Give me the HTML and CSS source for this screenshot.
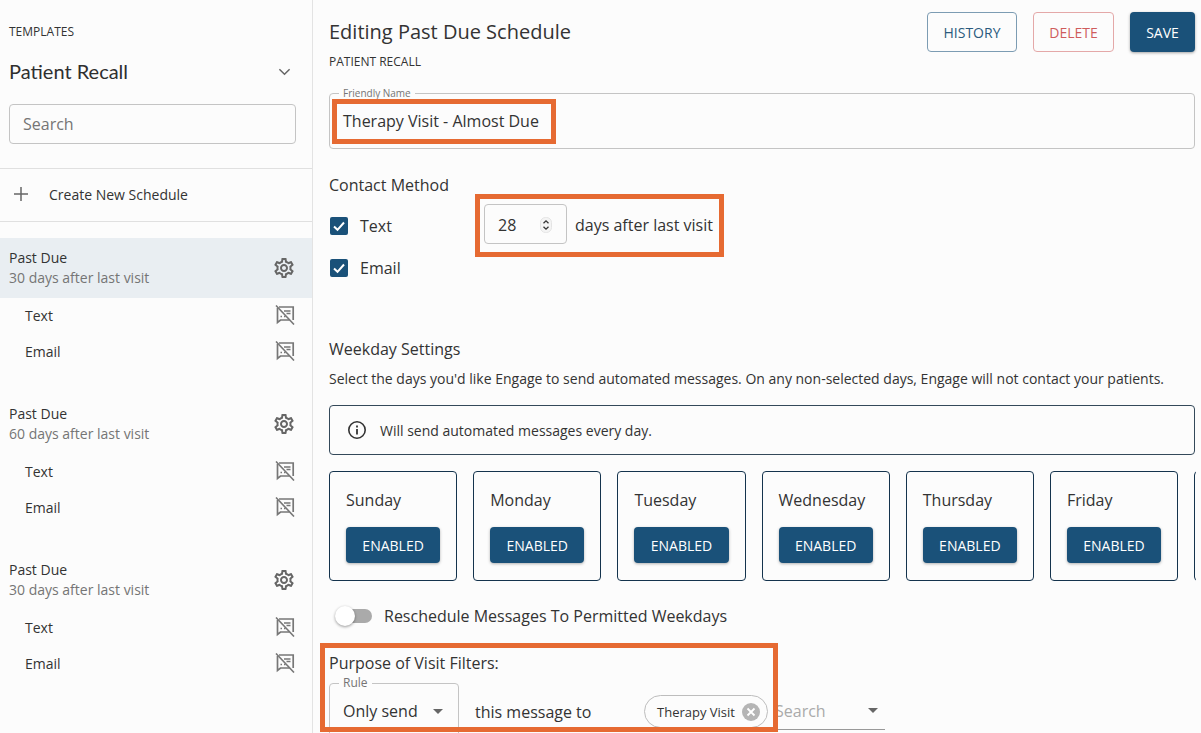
FILE: index.html
```html
<!DOCTYPE html>
<html lang="en">
<head>
    <meta charset="UTF-8">
    <title>Editing Past Due Schedule</title>
    <link rel="stylesheet" href="styles.css">
</head>
<body>
    <svg class="defs">
        <symbol id="gear" viewBox="0 0 24 24">
            <path fill="currentColor" d="M19.43 12.98c.04-.32.07-.64.07-.98 0-.34-.03-.66-.07-.98l2.11-1.65c.19-.15.24-.42.12-.64l-2-3.46c-.09-.16-.26-.25-.44-.25-.06 0-.12.01-.17.03l-2.49 1c-.52-.4-1.08-.73-1.69-.98l-.38-2.65C14.46 2.18 14.25 2 14 2h-4c-.25 0-.46.18-.49.42l-.38 2.65c-.61.25-1.17.59-1.69.98l-2.49-1c-.06-.02-.12-.03-.18-.03-.17 0-.34.09-.43.25l-2 3.46c-.13.22-.07.49.12.64l2.11 1.65c-.04.32-.07.65-.07.98 0 .33.03.66.07.98l-2.11 1.65c-.19.15-.24.42-.12.64l2 3.46c.09.16.26.25.44.25.06 0 .12-.01.17-.03l2.49-1c.52.4 1.08.73 1.69.98l.38 2.65c.03.24.24.42.49.42h4c.25 0 .46-.18.49-.42l.38-2.65c.61-.25 1.17-.59 1.69-.98l2.49 1c.06.02.12.03.18.03.17 0 .34-.09.43-.25l2-3.46c.12-.22.07-.49-.12-.64l-2.11-1.65zm-1.98-1.71c.04.31.05.52.05.73 0 .21-.02.43-.05.73l-.14 1.13.89.7 1.08.84-.7 1.21-1.27-.51-1.04-.42-.9.68c-.43.32-.84.56-1.25.73l-1.06.43-.16 1.13-.2 1.35h-1.4l-.19-1.35-.16-1.13-1.06-.43c-.43-.18-.83-.41-1.23-.71l-.91-.7-1.06.43-1.27.51-.7-1.21 1.08-.84.89-.7-.14-1.13c-.03-.31-.05-.54-.05-.74s.02-.43.05-.73l.14-1.13-.89-.7-1.08-.84.7-1.21 1.27.51 1.04.42.9-.68c.43-.32.84-.56 1.25-.73l1.06-.43.16-1.13.2-1.35h1.39l.19 1.35.16 1.13 1.06.43c.43.18.83.41 1.23.71l.91.7 1.06-.43 1.27-.51.7 1.21-1.07.85-.89.7.14 1.13zM12 8c-2.21 0-4 1.79-4 4s1.79 4 4 4 4-1.79 4-4-1.79-4-4-4zm0 6c-1.1 0-2-.9-2-2s.9-2 2-2 2 .9 2 2-.9 2-2 2z"/>
        </symbol>
        <symbol id="msgoff" viewBox="0 0 20 20">
            <path fill="none" stroke="currentColor" stroke-width="1.700" d="M2.500 3v14.500l3-2.500h9M4 2h14.200v13"/>
            <path fill="none" stroke="currentColor" stroke-width="1.300" d="M9 6h6.500M11.500 8.500h4M5.500 11.500h1.500M9 11.500h1.500"/>
            <path fill="none" stroke="currentColor" stroke-width="1.600" d="M1 .5l18 19"/>
        </symbol>
    </svg>

    <div class="page">
        <aside class="sidebar">
            <div class="side-top">
                <div class="caption">TEMPLATES</div>
                <div class="picker">
                    <span>Patient Recall</span>
                    <svg class="chev" viewBox="0 0 14 8"><path d="M1.500 1l5.500 5.500L12.500 1" fill="none" stroke="currentColor" stroke-width="1.600"/></svg>
                </div>
                <div class="side-search">Search</div>
            </div>
            <div class="create">
                <svg class="plus" viewBox="0 0 14 14"><path d="M7 0v14M0 7h14" stroke="currentColor" stroke-width="1.500"/></svg>
                <span>Create New Schedule</span>
            </div>

            <div class="group">
                <div class="group-head active">
                    <div><div class="g-name">Past Due</div><div class="g-sub">30 days after last visit</div></div>
                    <svg class="gear"><use href="#gear"/></svg>
                </div>
                <div class="g-row"><span>Text</span><svg class="off"><use href="#msgoff"/></svg></div>
                <div class="g-row"><span>Email</span><svg class="off"><use href="#msgoff"/></svg></div>
            </div>
            <div class="group">
                <div class="group-head">
                    <div><div class="g-name">Past Due</div><div class="g-sub">60 days after last visit</div></div>
                    <svg class="gear"><use href="#gear"/></svg>
                </div>
                <div class="g-row"><span>Text</span><svg class="off"><use href="#msgoff"/></svg></div>
                <div class="g-row"><span>Email</span><svg class="off"><use href="#msgoff"/></svg></div>
            </div>
            <div class="group">
                <div class="group-head">
                    <div><div class="g-name">Past Due</div><div class="g-sub">30 days after last visit</div></div>
                    <svg class="gear"><use href="#gear"/></svg>
                </div>
                <div class="g-row"><span>Text</span><svg class="off"><use href="#msgoff"/></svg></div>
                <div class="g-row"><span>Email</span><svg class="off"><use href="#msgoff"/></svg></div>
            </div>
        </aside>

        <main class="main">
            <header class="top">
                <div>
                    <h1>Editing Past Due Schedule</h1>
                    <div class="caption">PATIENT RECALL</div>
                </div>
                <div class="actions">
                    <button class="btn history">HISTORY</button>
                    <button class="btn delete">DELETE</button>
                    <button class="btn save">SAVE</button>
                </div>
            </header>

            <fieldset class="field friendly">
                <legend>Friendly Name</legend>
                <div>Therapy Visit - Almost Due</div>
            </fieldset>

            <h2 class="contact-title">Contact Method</h2>
            <div class="contact">
                <div class="checks">
                    <div class="check"><svg class="box" viewBox="0 0 18 18"><rect width="18" height="18" rx="2" fill="#1a5179"/><path d="M4 9.500l3.500 3.300L14 5.500" fill="none" stroke="#fff" stroke-width="2"/></svg>Text</div>
                    <div class="check"><svg class="box" viewBox="0 0 18 18"><rect width="18" height="18" rx="2" fill="#1a5179"/><path d="M4 9.500l3.500 3.300L14 5.500" fill="none" stroke="#fff" stroke-width="2"/></svg>Email</div>
                </div>
                <div class="days">
                    <div class="number">
                        <span>28</span>
                        <svg class="spin" viewBox="0 0 12 16"><rect x=".5" y=".5" width="11" height="15" rx="5" fill="#f4f4f4" stroke="#e4e4e4"/><path d="M3.500 6.200L6 3.800l2.500 2.400M3.500 9.800L6 12.200l2.500-2.400" fill="none" stroke="#333" stroke-width="1.300"/></svg>
                    </div>
                    <span class="days-text">days after last visit</span>
                </div>
            </div>

            <h2>Weekday Settings</h2>
            <p class="week-desc">Select the days you'd like Engage to send automated messages. On any non-selected days, Engage will not contact your patients.</p>
            <div class="info">
                <svg class="info-icon" viewBox="0 0 20 20"><circle cx="10" cy="10" r="8.200" fill="none" stroke="#333" stroke-width="1.600"/><path d="M10 9v5.500M10 5.500v2" stroke="#333" stroke-width="1.800"/></svg>
                <span>Will send automated messages every day.</span>
            </div>

            <div class="cards">
                <div class="card"><div>Sunday</div><button class="enabled">ENABLED</button></div>
                <div class="card"><div>Monday</div><button class="enabled">ENABLED</button></div>
                <div class="card"><div>Tuesday</div><button class="enabled">ENABLED</button></div>
                <div class="card"><div>Wednesday</div><button class="enabled">ENABLED</button></div>
                <div class="card"><div>Thursday</div><button class="enabled">ENABLED</button></div>
                <div class="card"><div>Friday</div><button class="enabled">ENABLED</button></div>
                <div class="card card-cut"></div>
            </div>

            <div class="resched">
                <span class="switch"><i></i></span>
                <span>Reschedule Messages To Permitted Weekdays</span>
            </div>

            <div class="purpose">Purpose of Visit Filters:</div>
            <div class="filters">
                <fieldset class="field rule">
                    <legend>Rule</legend>
                    <div class="rule-val"><span>Only send</span><i class="caret"></i></div>
                </fieldset>
                <span class="to">this message to</span>
                <span class="chip">Therapy Visit
                    <svg class="chip-x" viewBox="0 0 18 18"><circle cx="9" cy="9" r="9" fill="#b5b5b5"/><path d="M5.500 5.500l7 7M12.500 5.500l-7 7" stroke="#fff" stroke-width="1.800"/></svg>
                </span>
                <div class="combo"><span>Search</span><i class="caret"></i></div>
            </div>
        </main>
    </div>

    <!-- orange call-outs drawn on top of the page -->
    <div class="mark mark-name"></div>
    <div class="mark mark-days"></div>
    <div class="mark mark-filter"></div>
</body>
</html>
```

FILE: styles.css
```css
* {
    box-sizing: border-box;
}

html, body {
    margin: 0;
    height: 733px;
    overflow: hidden;
}

body {
    background-color: #fcfcfc;
    color: #333;
    font: normal 16px "Open Sans", sans-serif;
    position: relative;
}

.defs {
    display: none;
}

.page {
    display: flex;
    height: 733px;
}

.caption {
    font-size: 12px;
    line-height: 16px;
    color: #333;
}

/* sidebar */
.sidebar {
    width: 313px;
    flex: none;
    border-right: 1px solid #e3e3e3;
}

.side-top {
    padding: 24px 16px 24px 9px;
    height: 169px;
    border-bottom: 1px solid #e0e0e0;
}

.picker {
    display: flex;
    justify-content: space-between;
    align-items: center;
    font: 20px/28px "Lato", sans-serif;
    color: #2f2f2f;
    margin-top: 17px;
    padding-right: 5px;
}

.chev {
    width: 13px;
    height: 8px;
    color: #666;
    margin-top: 2px;
}

.side-search {
    margin-top: 19px;
    width: 287px;
    height: 40px;
    border: 1px solid #c4c4c4;
    border-radius: 4px;
    padding: 0 13px;
    line-height: 38px;
    color: #757575;
}

.create {
    display: flex;
    align-items: center;
    height: 53px;
    padding: 0 0 2px 14px;
    border-bottom: 1px solid #e0e0e0;
    margin-bottom: 16px;
    font-size: 14px;
}

.plus {
    width: 14px;
    height: 14px;
    color: #666;
    margin-right: 21px;
}

.group {
    height: 156px;
}

.group-head {
    height: 60px;
    padding: 10px 16px 0 9px;
    display: flex;
    justify-content: space-between;
    font-size: 14px;
    line-height: 20px;
}

.group-head.active {
    background-color: #e9eef2;
}

.g-sub {
    color: #757575;
}

.gear {
    width: 24px;
    height: 24px;
    margin-top: 8px;
    color: #666;
}

.g-row {
    height: 36px;
    display: flex;
    justify-content: space-between;
    align-items: center;
    padding: 0 17px 2px 25px;
    font-size: 14px;
}

.off {
    width: 20px;
    height: 20px;
    color: #777;
}

/* main column */
.main {
    flex: 1;
    min-width: 0;
    padding: 12px 6px 0 16px;
}

.top {
    display: flex;
    justify-content: space-between;
    height: 57px;
}

h1 {
    margin: 4px 0 6px;
    font-size: 20px;
    font-weight: 400;
    line-height: 32px;
}

.actions {
    display: flex;
    gap: 16px;
    height: 40px;
}

.btn {
    height: 40px;
    border-radius: 4px;
    font: 14px "Open Sans", sans-serif;
    background: transparent;
    padding: 0;
}

.history {
    width: 90px;
    border: 1px solid #7c9cb3;
    color: #2b5a7e;
}

.delete {
    width: 81px;
    border: 1px solid #e4a8a8;
    color: #cf5c5c;
}

.save {
    width: 65px;
    border: 0;
    background-color: #1a5179;
    color: #fff;
    box-shadow: 0 1px 3px rgba(0, 0, 0, 0.35);
}

.field {
    margin: 0;
    border: 1px solid #c4c4c4;
    border-radius: 4px;
    padding: 0 13px;
}

.field legend {
    font-size: 10px;
    line-height: 12px;
    color: #757575;
    padding: 0 4px;
    margin-left: -4px;
}

.friendly {
    height: 62px;
    margin-top: 18px;
    padding-top: 5px;
    line-height: 34px;
}

h2 {
    margin: 0;
    font-size: 16px;
    font-weight: 400;
    line-height: 22px;
}

.contact-title {
    margin-top: 25px;
}

.contact {
    display: flex;
    height: 142px;
}

.checks {
    width: 155px;
    padding-top: 9px;
}

.check {
    display: flex;
    align-items: center;
    height: 42px;
    font-size: 16px;
}

.box {
    width: 18px;
    height: 18px;
    margin: 0 12px 0 1px;
}

.days {
    display: flex;
    align-items: center;
    height: 40px;
    margin-top: 8px;
}

.days-text {
    padding-top: 2px;
}

.number {
    width: 83px;
    height: 40px;
    border: 1px solid #c4c4c4;
    border-radius: 4px;
    padding: 2px 14px 0 13px;
    margin-right: 8px;
    display: flex;
    justify-content: space-between;
    align-items: center;
}

.spin {
    width: 12px;
    height: 16px;
}

.week-desc {
    margin: 10px 0 0;
    font-size: 14px;
    line-height: 18px;
}

.info {
    margin-top: 17px;
    height: 50px;
    border: 1px solid #34495a;
    border-radius: 4px;
    display: flex;
    align-items: center;
    padding-left: 17px;
    font-size: 14px;
}

.info-icon {
    width: 20px;
    height: 20px;
    margin-right: 13px;
}

.cards {
    display: flex;
    gap: 16px;
    margin-top: 16px;
    overflow: hidden;
    margin-right: -1px;
}

.card {
    width: 128.200px;
    height: 110px;
    flex: none;
    border: 1px solid #14334d;
    border-radius: 4px;
    padding: 16px 16px 0;
    line-height: 24px;
}

.enabled {
    display: block;
    width: 94.200px;
    height: 36px;
    margin-top: 15px;
    border: 0;
    border-radius: 4px;
    background-color: #1a5179;
    color: #fff;
    font: 14px "Open Sans", sans-serif;
    box-shadow: 0 1px 3px rgba(0, 0, 0, 0.3);
}

.resched {
    display: flex;
    align-items: center;
    height: 24px;
    margin-top: 23px;
    padding-left: 9px;
}

.switch {
    position: relative;
    width: 34px;
    height: 14px;
    border-radius: 7px;
    background-color: #aaa;
    margin-right: 12px;
}

.switch i {
    position: absolute;
    left: -3px;
    top: -3px;
    width: 20px;
    height: 20px;
    border-radius: 50%;
    background-color: #fff;
    box-shadow: 0 1px 3px rgba(0, 0, 0, 0.4);
}

.purpose {
    margin-top: 24px;
    line-height: 22px;
}

.filters {
    display: flex;
    align-items: flex-start;
}

.rule {
    width: 130px;
    height: 70px;
    flex: none;
    margin-top: 2px;
    padding-top: 4px;
}

.rule legend {
    font-size: 12px;
    line-height: 14px;
}

.rule-val {
    display: flex;
    justify-content: space-between;
    align-items: center;
    padding-right: 2px;
    line-height: 34px;
}

.caret {
    width: 0;
    height: 0;
    border-left: 5px solid transparent;
    border-right: 5px solid transparent;
    border-top: 5px solid #666;
}

.to {
    margin: 27px 0 0 16px;
    width: 170px;
    flex: none;
    line-height: 22px;
}

.chip {
    display: flex;
    align-items: center;
    justify-content: space-between;
    width: 124px;
    height: 33px;
    flex: none;
    margin: 21px 0 0 -1px;
    border: 1px solid #bdbdbd;
    border-radius: 17px;
    padding: 0 7px 0 12px;
    font-size: 13px;
}

.chip-x {
    width: 18px;
    height: 18px;
}

.combo {
    width: 116px;
    height: 38px;
    flex: none;
    margin: 18px 0 0 1px;
    border-bottom: 1px solid #999;
    padding: 0 7px 0 6px;
    display: flex;
    justify-content: space-between;
    align-items: center;
    color: #aaa;
}

/* annotation boxes */
.mark {
    position: absolute;
    border: 5px solid #e66a32;
}

.mark-name {
    left: 332px;
    top: 99px;
    width: 224px;
    height: 45px;
}

.mark-days {
    left: 475px;
    top: 194px;
    width: 249px;
    height: 63px;
}

.mark-filter {
    left: 320px;
    top: 643px;
    width: 458px;
    height: 89px;
}
```
